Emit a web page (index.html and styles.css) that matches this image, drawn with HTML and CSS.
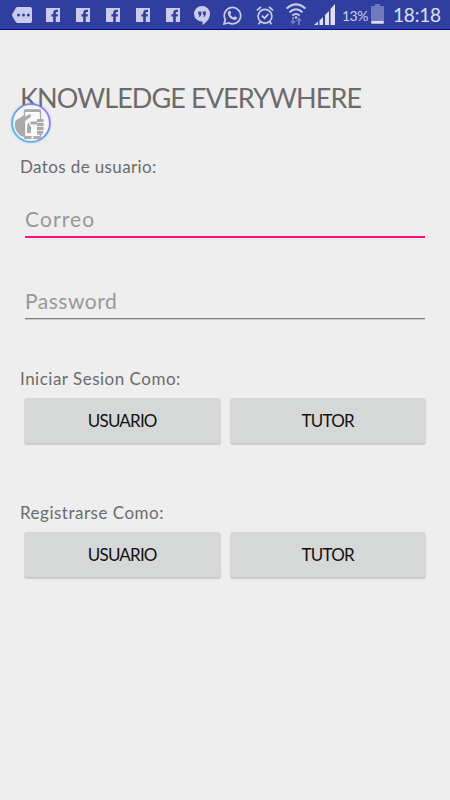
FILE: index.html
```html
<!DOCTYPE html>
<html lang="es">
<head>
    <meta charset="UTF-8">
    <meta name="viewport" content="width=device-width, initial-scale=1.0">
    <title>Knowledge Everywhere</title>
    <link rel="stylesheet" href="styles.css">
</head>
<body>
    <!-- Shared icons -->
    <svg class="icon-defs" width="0" height="0">
        <symbol id="facebook" viewBox="0 0 14 14">
            <path fill="#c9cdea" d="M0 0h14v14H0z"/>
            <path fill="#303f9f" d="M7.2 14V8.6H5.4V6.2h1.8V4.8c0-2 1.2-3 3.2-3H12v2.2h-1.1c-.8 0-1.1.3-1.1 1v1.2H12l-.3 2.4H9.8V14z"/>
        </symbol>
    </svg>

    <div class="status-bar">
        <div class="notifications">
            <svg class="more" width="20" height="16" viewBox="0 0 20 16">
                <path fill="#c9cdea" d="M5.5 0H18q2 0 2 2v12q0 2-2 2H5.500Q4.500 16 3.800 15L.5 9.500Q-.3 8 .5 6.500L3.800 1Q4.500 0 5.500 0z"/>
                <circle cx="6.500" cy="8" r="1.500" fill="#303f9f"/>
                <circle cx="11.500" cy="8" r="1.500" fill="#303f9f"/>
                <circle cx="16.300" cy="8" r="1.500" fill="#303f9f"/>
            </svg>
            <svg class="fb" width="14" height="14"><use href="#facebook"/></svg>
            <svg class="fb" width="14" height="14"><use href="#facebook"/></svg>
            <svg class="fb" width="14" height="14"><use href="#facebook"/></svg>
            <svg class="fb" width="14" height="14"><use href="#facebook"/></svg>
            <svg class="fb" width="14" height="14"><use href="#facebook"/></svg>
            <svg class="hangouts" width="16" height="19" viewBox="0 0 16 19">
                <path fill="#c9cdea" d="M8 0a8 7.800 0 0 1 8 7.800c0 4.700-3.500 8.700-7.500 11.200v-3.400H8A8 7.800 0 0 1 8 0z"/>
                <path fill="#303f9f" d="M4.300 5.500h3v3L6 10.700H4.800l.7-2.200H4.300zM8.800 5.500h3v3l-1.300 2.200H9.300l.7-2.200H8.800z"/>
            </svg>
            <svg class="whatsapp" width="19" height="19" viewBox="0 0 19 19">
                <path fill="none" stroke="#c9cdea" stroke-width="1.700" d="M1 18l1.300-4.400A8.200 8.200 0 1 1 5.500 16.800z"/>
                <path fill="#c9cdea" d="M6.200 4.800h1l1 2.300-.9 1.300c.8 1.500 1.800 2.400 3.300 3.100l1.200-1.300 2.400 1.200c0 1.600-1.100 2.500-2.700 2.500-3.400-.5-6.300-3.200-6.700-6.400 0-1.200.5-2.100 1.400-2.700z"/>
            </svg>
            <svg class="alarm" width="18" height="19" viewBox="0 0 18 19">
                <g fill="none" stroke="#c9cdea" stroke-width="1.700">
                    <circle cx="9" cy="10.200" r="6.900"/>
                    <path d="M5.800 9.600l2.600 2.600 4-4M.8 4.300L5 1M13 1l4.200 3.300M4.300 15.800l-1.800 2.500M13.700 15.800l1.800 2.500"/>
                </g>
            </svg>
            <svg class="wifi" width="20" height="22" viewBox="0 0 20 22">
                <g fill="none" stroke="#c9cdea" stroke-width="2">
                    <path d="M.6 5.600Q10-2.800 19.400 5.600M3.500 9.200Q10 3.300 16.500 9.200M6.400 12.600Q10 9.400 13.600 12.600"/>
                </g>
                <circle cx="10" cy="14.500" r="1.300" fill="#c9cdea"/>
                <path fill="#7079bd" d="M6 14h2v4h2l-3 4-3-4h2zM12 22v-4h-2l3-4 3 4h-2v4z"/>
            </svg>
            <svg class="signal" width="21" height="21" viewBox="0 0 21 21">
                <path fill="#dfe1f2" d="M0 21l4-3.500V21zM5.500 16.500L9 13v8H5.500zM11 11l4-4v14h-4zM16.500 5L21 0v21h-4.500z"/>
            </svg>
            <span class="percent">13%</span>
            <svg class="battery" width="13" height="20" viewBox="0 0 13 20">
                <path fill="#7079bd" d="M4 0h5v2h4v18H0V2h4z"/>
                <path fill="#dfe1f2" d="M.5 17h12v2.500H.5z"/>
            </svg>
            <span class="clock">18:18</span>
        </div>
    </div>

    <main class="login">
        <h1>KNOWLEDGE EVERYWHERE</h1>

        <p class="label label-data">Datos de usuario:</p>
        <input class="field email" type="text" placeholder="Correo">
        <input class="field password" type="password" placeholder="Password">

        <p class="label label-login">Iniciar Sesion Como:</p>
        <div class="buttons">
            <button class="btn">USUARIO</button>
            <button class="btn">TUTOR</button>
        </div>

        <p class="label label-register">Registrarse Como:</p>
        <div class="buttons">
            <button class="btn">USUARIO</button>
            <button class="btn">TUTOR</button>
        </div>
    </main>

    <!-- Floating one-hand assistant -->
    <svg class="assistant" width="46" height="46" viewBox="0 0 46 46">
        <defs>
            <linearGradient id="ring" x1="0" y1="1" x2="1" y2="0">
                <stop offset="0.2" stop-color="#50b4f8"/>
                <stop offset="0.8" stop-color="#8580ee"/>
            </linearGradient>
        </defs>
        <circle cx="23" cy="23" r="21.500" fill="#000" opacity="0.04"/>
        <circle cx="23" cy="23" r="18.900" fill="#f4f4f6" stroke="url(#ring)" stroke-width="1.800"/>
        <path fill="#aaa" d="M7 22q1-3 4-3.500l6-4 4-1.500q2 0 1.500 2l-6 5v17q-5-1-6.500-4Q6 29 7 22z"/>
        <rect x="16.500" y="10" width="16" height="28" rx="2" fill="#fafafa" stroke="#aaa" stroke-width="1.300"/>
        <path fill="#aaa" d="M16 9.500h17v2.500H16zM16 36h17v3H16z"/>
        <path fill="#aaa" d="M15 18l7-4q2 1 .5 3L16 22z"/>
        <path fill="#aaa" d="M22.500 21.500H29V19h6q1.500 1 0 3.500 1.500 1.500 0 4 1.500 1.500 0 4 1 2.500-1 4h-5v-10h-6.500zM20 22l3 5q1 1 0 2v4h-4v-6z"/>
        <path fill="none" stroke="#f4f4f6" stroke-width=".8" d="M29 22.500h6M29 26.500h6M29 30.500h6"/>
        <circle cx="24.500" cy="37.500" r="1.200" fill="#fff"/>
    </svg>
</body>
</html>
```
FILE: styles.css
```css
* {
    box-sizing: border-box;
}
body {
    margin: 0;
    height: 800px;
    overflow: hidden;
    background: #eeeeee;
    font-family: Lato, sans-serif;
    color: #6b6b6b;
}
.icon-defs {
    position: absolute;
}
.status-bar {
    height: 30px;
    background: #303f9f;
    border-bottom: 1px solid #000b8c;
}
.notifications {
    display: flex;
    height: 29px;
    padding-left: 12px;
    align-items: flex-start;
    color: #c9cdea;
}
.notifications svg {
    flex: none;
}
.more {
    margin-top: 7px;
    margin-right: -2.5px;
}
.fb {
    margin-top: 8px;
    margin-left: 16px;
}
.hangouts {
    margin: 6px 0 0 14.5px;
}
.whatsapp {
    margin: 6px 0 0 13px;
}
.alarm {
    margin: 6px 0 0 14px;
}
.wifi {
    margin: 3px 0 0 12px;
}
.signal {
    margin: 4px 0 0 8px;
}
.percent {
    width: 26px;
    margin-left: 7px;
    font-size: 14px;
    line-height: 31px;
    letter-spacing: -0.5px;
    white-space: nowrap;
}
.battery {
    margin: 4px 0 0 3px;
}
.clock {
    margin-left: 9px;
    font-size: 19px;
    line-height: 30px;
    letter-spacing: -0.2px;
    color: #dfe1f2;
}
.login {
    padding: 50px 20px 0;
}
h1 {
    margin: 0;
    height: 36px;
    font-size: 27px;
    font-weight: 400;
    line-height: 36px;
    letter-spacing: -0.9px;
    white-space: nowrap;
}
.label {
    margin: 0;
    height: 22px;
    font-size: 17px;
    line-height: 22px;
    letter-spacing: 0.5px;
}
.label-data {
    margin-top: 40px;
    letter-spacing: 0.38px;
}
.field {
    display: block;
    width: 400px;
    height: 38px;
    margin: 0 5px;
    padding: 0;
    border: 0;
    border-bottom: 2px solid #8f8f8f;
    background: none;
    font-family: inherit;
    font-size: 21px;
    outline: none;
}
.field::placeholder {
    color: #989898;
    opacity: 1;
}
.email {
    margin-top: 22px;
    border-bottom-color: #ff1178;
    letter-spacing: 1.1px;
}
.password {
    height: 37px;
    margin-top: 44px;
    border-bottom-width: 1px;
    border-bottom-color: #828282;
    box-shadow: 0 1px 0 #c8c8c8;
    letter-spacing: 0.5px;
}
.label-login {
    margin-top: 49px;
}
.label-register {
    margin-top: 59px;
}
.buttons {
    display: flex;
    gap: 9px;
    margin: 8px 4px 0;
}
.btn {
    width: 197px;
    height: 45px;
    padding: 0;
    border: 0;
    border-radius: 3px;
    background: #d6d8d7;
    box-shadow: 0 2px 1px rgba(0,0,0,0.15);
    font-family: inherit;
    font-size: 17px;
    letter-spacing: -0.8px;
    color: #111;
}
.assistant {
    position: absolute;
    left: 8px;
    top: 100px;
}
```
